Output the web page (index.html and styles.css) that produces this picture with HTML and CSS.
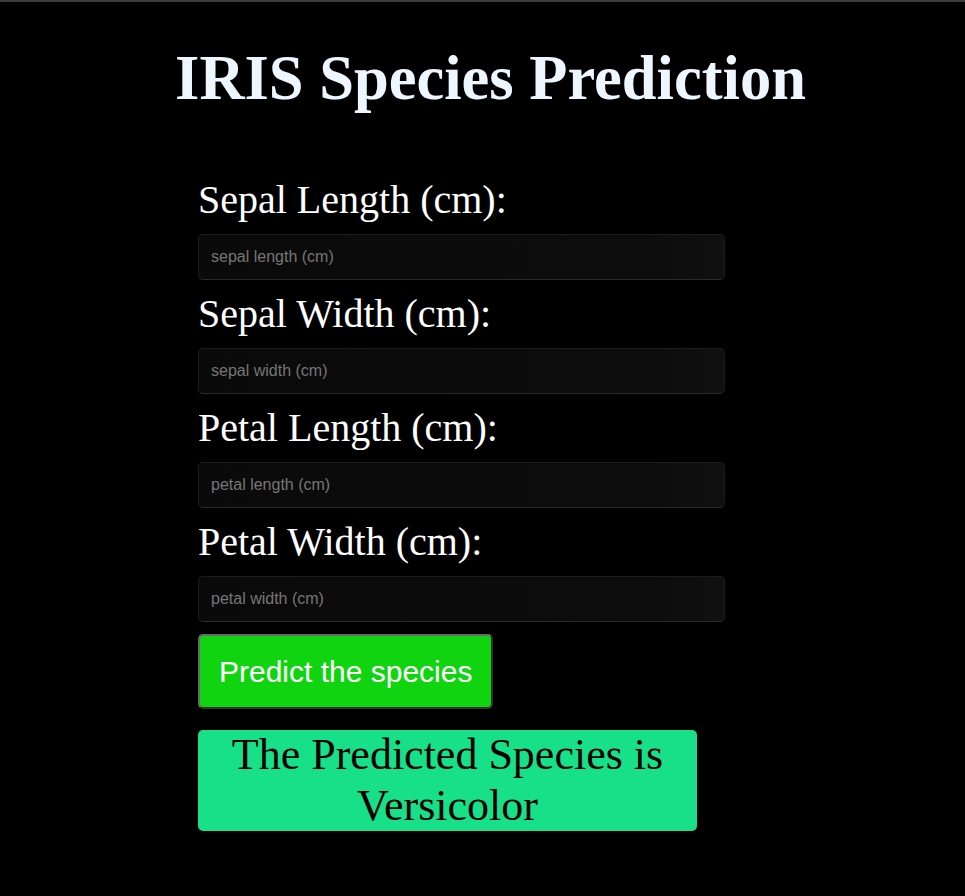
FILE: index.html
```html
<!DOCTYPE html>
<html lang="en">
<head>
<meta charset="utf-8">
<title>IRIS Species Prediction</title>
<link rel="stylesheet" href="styles.css">
</head>
<body>
<div class="topline"></div>
<div class="page">
  <h1 class="title">IRIS Species Prediction</h1>
  <form class="form">
    <label class="label" for="sl">Sepal Length (cm):</label>
    <input class="field" id="sl" type="text" placeholder="sepal length (cm)">
    <label class="label" for="sw">Sepal Width (cm):</label>
    <input class="field" id="sw" type="text" placeholder="sepal width (cm)">
    <label class="label" for="pl">Petal Length (cm):</label>
    <input class="field" id="pl" type="text" placeholder="petal length (cm)">
    <label class="label" for="pw">Petal Width (cm):</label>
    <input class="field" id="pw" type="text" placeholder="petal width (cm)">
    <div class="actions"><button class="btn" type="button">Predict the species</button></div>
    <div class="result">The Predicted Species is Versicolor</div>
  </form>
</div>
</body>
</html>
```
FILE: styles.css
```css
html, body {
  margin: 0;
  padding: 0;
  background: #000;
}
body {
  font-family: "Liberation Serif", "Times New Roman", serif;
  color: #fff;
}
.topline {
  height: 2px;
  background: #3c3c3e;
}
.page {
  padding-left: 16px;
}
.title {
  margin: 0;
  padding-top: 40px;
  text-align: center;
  font-size: 62.5px;
  line-height: 72px;
  font-weight: bold;
  color: #eef6ff;
}
.form {
  display: flex;
  flex-direction: column;
  align-items: flex-start;
  margin: 64px 0 0 182px;
  width: 527px;
}
.label {
  font-size: 40px;
  line-height: 44px;
  color: #fff;
  margin-bottom: 12px;
}
.field {
  box-sizing: border-box;
  width: 527px;
  height: 46px;
  margin: 0 0 12px 0;
  padding: 0 12px;
  background: linear-gradient(90deg, #0a0a0a 0%, #0c0c0c 85%, #101010 100%);
  border: 1px solid #1c1c1c;
  border-bottom-color: #2a2a2a;
  border-radius: 5px;
  font-family: "Liberation Sans", Arial, sans-serif;
  font-size: 16px;
  color: #ddd;
  outline: none;
}
.field::placeholder {
  color: #767676;
}
.actions {
  display: flex;
}
.btn {
  box-sizing: border-box;
  height: 75px;
  padding: 0 19px;
  white-space: nowrap;
  background: #10d410;
  border: 2px solid #6a6a6a;
  border-right-color: #333;
  border-bottom-color: #333;
  border-radius: 5px;
  font-family: "Liberation Sans", Arial, sans-serif;
  font-size: 30px;
  color: #fff;
}
.result {
  margin-top: 21px;
  width: 499px;
  height: 101px;
  box-sizing: border-box;
  background: #17e088;
  border-radius: 5px;
  color: #000;
  font-size: 44px;
  line-height: 50.5px;
  text-align: center;
  padding: 0 30px;
}
```
